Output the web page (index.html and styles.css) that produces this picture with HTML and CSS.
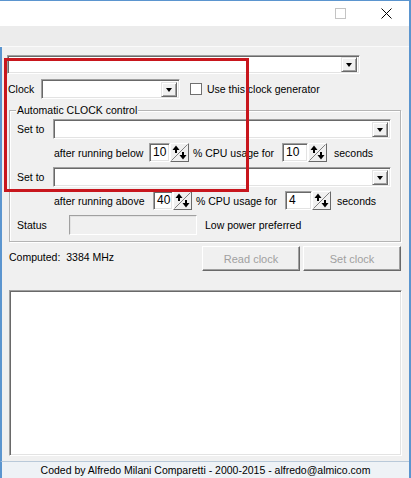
FILE: index.html
```html
<!DOCTYPE html>
<html>
<head>
<meta charset="utf-8">
<link rel="stylesheet" href="styles.css">
</head>
<body>
<div class="win">
  <div class="titlebar">
    <div class="capbtn"><span class="maxbox"></span></div>
    <div class="capbtn">
      <svg width="11" height="11" viewBox="0 0 11 11"><path d="M0.5 0.5 L10.5 10.5 M10.5 0.5 L0.5 10.5" stroke="#000" stroke-width="1" fill="none"/></svg>
    </div>
  </div>
  <div class="band"></div>
  <div class="content">
    <div class="row row-top">
      <div class="combo w-top"><span class="ddbtn"><span class="tri"></span></span></div>
    </div>
    <div class="row row-clock">
      <span class="lbl w-clock">Clock</span>
      <div class="combo w-clockcombo"><span class="ddbtn"><span class="tri"></span></span></div>
      <span class="check"></span>
      <span class="lbl">Use this clock generator</span>
    </div>
    <fieldset class="group">
      <legend>Automatic CLOCK control</legend>
      <div class="row set-row first">
        <span class="lbl w-set">Set to</span>
        <div class="combo w-set-combo"><span class="ddbtn"><span class="tri"></span></span></div>
      </div>
      <div class="row spin-row">
        <span class="lbl w-after1">after running below</span>
        <span class="edit w-e1">10</span>
        <span class="spin"><svg width="17" height="17" viewBox="0 0 17 17"><line x1="0.5" y1="16.5" x2="16.5" y2="0.5" stroke="#808080"/><polygon points="5,1.5 1.5,6 8.5,6" fill="#000"/><rect x="4" y="5" width="2" height="4" fill="#000"/><polygon points="12,15.5 8.5,11 15.5,11" fill="#000"/><rect x="11" y="8" width="2" height="4" fill="#000"/></svg></span>
        <span class="lbl w-cpu1">% CPU usage for</span>
        <span class="edit w-e2">10</span>
        <span class="spin"><svg width="17" height="17" viewBox="0 0 17 17"><line x1="0.5" y1="16.5" x2="16.5" y2="0.5" stroke="#808080"/><polygon points="5,1.5 1.5,6 8.5,6" fill="#000"/><rect x="4" y="5" width="2" height="4" fill="#000"/><polygon points="12,15.5 8.5,11 15.5,11" fill="#000"/><rect x="11" y="8" width="2" height="4" fill="#000"/></svg></span>
        <span class="lbl sec1">seconds</span>
      </div>
      <div class="row set-row">
        <span class="lbl w-set">Set to</span>
        <div class="combo w-set-combo"><span class="ddbtn"><span class="tri"></span></span></div>
      </div>
      <div class="row spin-row">
        <span class="lbl w-after2">after running above</span>
        <span class="edit w-e3">40</span>
        <span class="spin"><svg width="17" height="17" viewBox="0 0 17 17"><line x1="0.5" y1="16.5" x2="16.5" y2="0.5" stroke="#808080"/><polygon points="5,1.5 1.5,6 8.5,6" fill="#000"/><rect x="4" y="5" width="2" height="4" fill="#000"/><polygon points="12,15.5 8.5,11 15.5,11" fill="#000"/><rect x="11" y="8" width="2" height="4" fill="#000"/></svg></span>
        <span class="lbl w-cpu2">% CPU usage for</span>
        <span class="edit w-e4">4</span>
        <span class="spin"><svg width="17" height="17" viewBox="0 0 17 17"><line x1="0.5" y1="16.5" x2="16.5" y2="0.5" stroke="#808080"/><polygon points="5,1.5 1.5,6 8.5,6" fill="#000"/><rect x="4" y="5" width="2" height="4" fill="#000"/><polygon points="12,15.5 8.5,11 15.5,11" fill="#000"/><rect x="11" y="8" width="2" height="4" fill="#000"/></svg></span>
        <span class="lbl sec2">seconds</span>
      </div>
      <div class="row status-row">
        <span class="lbl w-status">Status</span>
        <span class="statbox"></span>
        <span class="lbl">Low power preferred</span>
      </div>
    </fieldset>
    <div class="row comp-row">
      <span class="lbl w-comp">Computed:&nbsp; 3384 MHz</span>
      <span class="btn">Read clock</span>
      <span class="btn btn2">Set clock</span>
    </div>
    <div class="memo"></div>
  </div>
  <div class="statusbar">Coded by Alfredo Milani Comparetti - 2000-2015 - alfredo@almico.com</div>
  <div class="redbox"></div>
</div>
</body>
</html>
```
FILE: styles.css
```css
html, body {
  margin: 0;
  padding: 0;
  background: #f0f0f0;
}
body {
  font-family: "Liberation Sans", Arial, sans-serif;
  font-size: 10.5px;
  color: #000;
}
.win {
  position: relative;
  width: 411px;
  height: 478px;
  box-sizing: border-box;
  border-top: 1px solid #5b95cf;
  border-right: 2px solid #5b95cf;
  background: #f0f0f0;
  overflow: hidden;
}
.titlebar {
  height: 25px;
  background: #fff;
  display: flex;
  justify-content: flex-end;
}
.capbtn {
  width: 46px;
  height: 25px;
  display: flex;
  align-items: center;
  justify-content: center;
}
.maxbox {
  width: 9px;
  height: 9px;
  border: 1px solid #c4c4c4;
}
.band {
  height: 20px;
  background: #ececec;
  border-bottom: 1px solid #fafafa;
}
.content {
  height: 414px;
  border-left: 2px solid #5b95cf;
  background: #f0f0f0;
  display: flex;
  flex-direction: column;
}
.row {
  display: flex;
  align-items: center;
  flex: none;
}
.lbl {
  white-space: nowrap;
  flex: none;
}
.row-top {
  margin-top: 8px;
  height: 19px;
  padding-left: 5px;
}
.combo {
  position: relative;
  box-sizing: border-box;
  background: #fff;
  border-top: 1px solid #a0a0a0;
  border-left: 1px solid #a0a0a0;
  border-bottom: 1px solid #fff;
  border-right: 1px solid #fff;
  box-shadow: inset 1px 1px 0 #696969, inset -1px -1px 0 #e3e3e3;
  display: flex;
  justify-content: flex-end;
  align-items: center;
  padding-right: 2px;
  flex: none;
}
.w-top { width: 353px; height: 19px; }
.ddbtn {
  box-sizing: border-box;
  width: 16px;
  height: 15px;
  background: #f0f0f0;
  border-top: 1px solid #e3e3e3;
  border-left: 1px solid #e3e3e3;
  border-bottom: 1px solid #696969;
  border-right: 1px solid #696969;
  box-shadow: inset 1px 1px 0 #fff, inset -1px -1px 0 #a0a0a0;
  display: flex;
  align-items: center;
  justify-content: center;
}
.tri {
  width: 0;
  height: 0;
  border-left: 3.5px solid transparent;
  border-right: 3.5px solid transparent;
  border-top: 4px solid #000;
  margin-top: 1px;
}
.row-clock {
  margin-top: 5px;
  height: 20px;
  padding-left: 6px;
}
.w-clock { width: 33px; }
.w-clockcombo { width: 139px; height: 20px; }
.check {
  box-sizing: border-box;
  width: 12px;
  height: 12px;
  margin-left: 10px;
  margin-right: 5px;
  background: #fff;
  border: 1px solid #707070;
  flex: none;
}
.group {
  margin: 5px 0 0 7px;
  padding: 0 0 6px 0;
  width: 392px;
  box-sizing: border-box;
  border: 1px solid #b4b4b4;
  box-shadow: inset 1px 1px 0 #fff, 1px 1px 0 #fff;
  min-width: 0;
}
.group legend {
  padding: 0 1px;
  margin-left: 6px;
  line-height: 13px;
  background: #f0f0f0;
}
.set-row {
  height: 20px;
  margin-top: 5px;
  padding-left: 7px;
}
.set-row.first { margin-top: 2px; }
.w-set { width: 36px; }
.w-set-combo { width: 338px; height: 20px; }
.spin-row {
  height: 19px;
  margin-top: 4px;
  padding-left: 44px;
}
.w-after1 { width: 95px; }
.w-after2 { width: 99px; }
.edit {
  box-sizing: border-box;
  height: 19px;
  background: #fff;
  border-top: 1px solid #a0a0a0;
  border-left: 1px solid #a0a0a0;
  border-bottom: 1px solid #fff;
  border-right: 1px solid #fff;
  box-shadow: inset 1px 1px 0 #696969, inset -1px -1px 0 #e3e3e3;
  padding-left: 3px;
  line-height: 17px;
  font-size: 12px;
  flex: none;
}
.w-e1 { width: 21px; }
.w-e2 { width: 26px; }
.w-e3 { width: 20px; }
.w-e4 { width: 27px; }
.spin {
  box-sizing: border-box;
  width: 19px;
  height: 19px;
  background: #f0f0f0;
  border-top: 1px solid #fff;
  border-left: 1px solid #fff;
  border-bottom: 1px solid #696969;
  border-right: 1px solid #696969;
  display: flex;
  flex: none;
}
.w-cpu1 { width: 89px; margin-left: 4px; }
.w-cpu2 { width: 89px; margin-left: 4px; }
.sec1 { margin-left: 7px; }
.sec2 { margin-left: 6px; }
.status-row {
  height: 20px;
  margin-top: 5px;
  padding-left: 7px;
}
.w-status { width: 52px; }
.statbox {
  box-sizing: border-box;
  width: 128px;
  height: 20px;
  background: #f0f0f0;
  border-top: 1px solid #a0a0a0;
  border-left: 1px solid #a0a0a0;
  border-bottom: 1px solid #fff;
  border-right: 1px solid #fff;
  box-shadow: inset 1px 1px 0 #e3e3e3;
  margin-right: 8px;
  flex: none;
}
.comp-row {
  margin-top: 4px;
  height: 25px;
  padding-left: 7px;
}
.w-comp { width: 193px; align-self: flex-start; margin-top: 5px; }
.btn {
  box-sizing: border-box;
  width: 98px;
  height: 25px;
  background: #f0f0f0;
  border-top: 1px solid #fff;
  border-left: 1px solid #fff;
  border-bottom: 1px solid #696969;
  border-right: 1px solid #696969;
  box-shadow: inset -1px -1px 0 #a0a0a0;
  color: #a0a0a0;
  font-size: 11px;
  display: flex;
  align-items: center;
  justify-content: center;
  flex: none;
}
.btn2 { margin-left: 3px; }
.memo {
  margin: 19px 0 0 7px;
  width: 393px;
  height: 166px;
  box-sizing: border-box;
  background: #fff;
  border-top: 1px solid #a0a0a0;
  border-left: 1px solid #a0a0a0;
  border-bottom: 1px solid #fff;
  border-right: 1px solid #fff;
  box-shadow: inset 1px 1px 0 #696969, inset -1px -1px 0 #e3e3e3;
  flex: none;
}
.statusbar {
  height: 16px;
  border-top: 1px solid #b9c9d9;
  border-left: 2px solid #5b95cf;
  background: #eef2f6;
  text-align: center;
  line-height: 16px;
  font-size: 10.5px;
}
.redbox {
  position: absolute;
  left: 4px;
  top: 57px;
  width: 245px;
  height: 134px;
  box-sizing: border-box;
  border: 3px solid #c8161d;
}
```
